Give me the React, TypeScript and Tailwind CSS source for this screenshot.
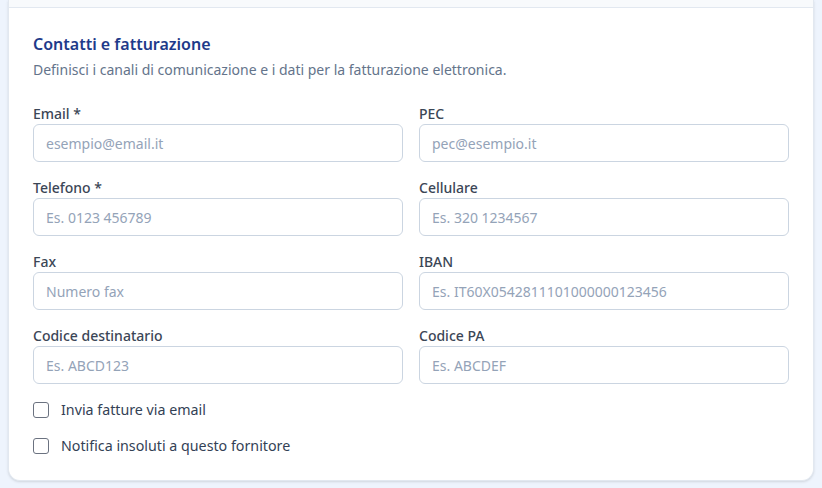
import React from "react";

const fields: { label: string; placeholder: string }[][] = [
  [
    { label: "Email *", placeholder: "esempio@email.it" },
    { label: "PEC", placeholder: "pec@esempio.it" },
  ],
  [
    { label: "Telefono *", placeholder: "Es. 0123 456789" },
    { label: "Cellulare", placeholder: "Es. 320 1234567" },
  ],
  [
    { label: "Fax", placeholder: "Numero fax" },
    { label: "IBAN", placeholder: "Es. IT60X0542811101000000123456" },
  ],
  [
    { label: "Codice destinatario", placeholder: "Es. ABCD123" },
    { label: "Codice PA", placeholder: "Es. ABCDEF" },
  ],
];

function Field({ label, placeholder }: { label: string; placeholder: string }) {
  return (
    <div className="flex flex-col">
      <label className="block text-sm leading-5 font-medium text-[#3b4656]">{label}</label>
      <input
        type="text"
        placeholder={placeholder}
        className="h-[38px] w-full rounded-md border border-[#cbd5e1] bg-white px-3 text-sm text-[#334155] placeholder:text-[#94a3b8] outline-none"
      />
    </div>
  );
}

function Check({ label }: { label: string }) {
  return (
    <label className="flex items-center gap-3 h-5">
      <span className="h-4 w-4 rounded-[3px] border border-[#6b7280] bg-white shrink-0" />
      <span className="text-[14.25px] leading-5 text-[#334155]">{label}</span>
    </label>
  );
}

export default function App() {
  return (
    <div
      className="min-h-[488px] bg-[#eef4fd] px-2 pb-2"
      style={{ fontFamily: '"Noto Sans", "Open Sans", sans-serif' }}
    >
      <div className="rounded-b-xl border border-t-0 border-[#e2e8f0] bg-white shadow-sm overflow-hidden">
        <div className="h-2 bg-[#f8fafc] border-b border-[#e2e8f0]" />
        <div className="px-6 pt-6 pb-6">
          <h2 className="text-base leading-6 font-semibold text-[#1e3a8a]">Contatti e fatturazione</h2>
          <p className="mt-1 text-sm leading-5 text-[#64748b]">
            Definisci i canali di comunicazione e i dati per la fatturazione elettronica.
          </p>
          <div className="mt-6 grid grid-cols-2 gap-x-4 gap-y-4">
            {fields.flat().map((f) => (
              <Field key={f.label} label={f.label} placeholder={f.placeholder} />
            ))}
          </div>
          <div className="mt-4 flex flex-col gap-4">
            <Check label="Invia fatture via email" />
            <Check label="Notifica insoluti a questo fornitore" />
          </div>
        </div>
      </div>
    </div>
  );
}
